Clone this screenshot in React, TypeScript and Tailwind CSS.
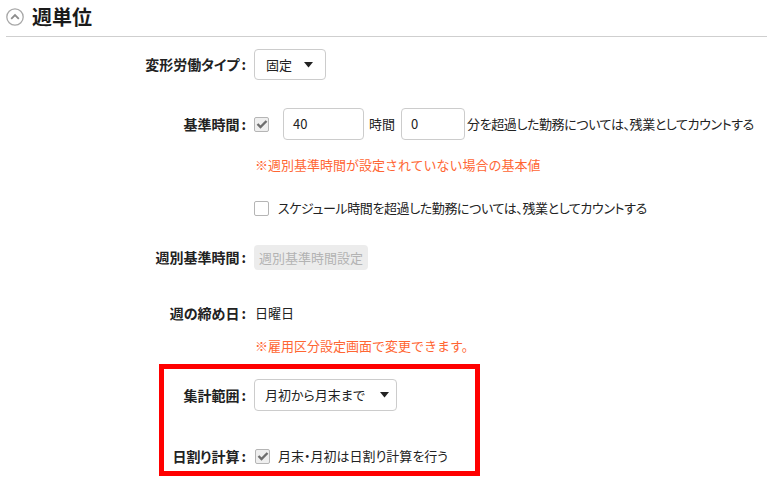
import React from "react";

const FONT = { fontFamily: '"Noto Sans CJK JP", "Noto Sans", sans-serif' };
const PALT = { fontFeatureSettings: '"palt"' };

const CheckBox: React.FC<{ checked?: boolean }> = ({ checked }) =>
  checked ? (
    <span className="flex h-[15px] w-[15px] shrink-0 items-center justify-center rounded-[2px] border border-[#b5b5b5] bg-[#efefef]">
      <svg width="12" height="10" viewBox="0 0 12 10">
        <path d="M1.5 5 L4.5 8 L10.5 2" fill="none" stroke="#6e6e6e" strokeWidth="2.4" />
      </svg>
    </span>
  ) : (
    <span className="h-[15px] w-[15px] shrink-0 rounded-[2px] border border-[#b5b5b5] bg-white" />
  );

const Caret = () => (
  <svg width="9" height="6" viewBox="0 0 9 6">
    <path d="M0 0 H9 L4.5 5.5 Z" fill="#222" />
  </svg>
);

const Row: React.FC<{ label: string; w?: string; className?: string; children: React.ReactNode }> = ({
  label,
  w = "w-[246px]",
  className = "",
  children,
}) => (
  <div className={`flex items-center ${className}`}>
    <div className={`${w} shrink-0 text-right text-[14px] font-bold text-[#222]`} style={PALT}>
      {label}
      <span className="ml-[2px]">:</span>
    </div>
    <div className="ml-[8px] flex items-center text-[13px] text-[#222]">{children}</div>
  </div>
);

export default function App() {
  return (
    <div className="h-[483px] w-[767px] overflow-hidden bg-white" style={FONT}>
      {/* Section header */}
      <div className="ml-[6px] flex h-[37px] items-center gap-[8px] border-b border-[#cfcfcf] pb-[2px]">
        <svg width="18" height="18" viewBox="0 0 18 18">
          <circle cx="9" cy="9" r="8.2" fill="none" stroke="#a8a8a8" strokeWidth="1.3" />
          <path d="M5.2 10.8 L9 7 L12.8 10.8" fill="none" stroke="#8c8c8c" strokeWidth="1.8" />
        </svg>
        <span className="text-[20px] font-bold leading-none text-[#1a1a1a]">週単位</span>
      </div>

      <Row label="変形労働タイプ" className="mt-[12px] h-[31px]">
        <div className="flex h-[31px] w-[72px] items-center justify-between rounded-[4px] border border-[#cccccc] pl-[11px] pr-[12px]">
          <span>固定</span>
          <Caret />
        </div>
      </Row>

      <Row label="基準時間" className="mt-[28px] h-[32px]">
        <CheckBox checked />
        <div className="ml-[14px] flex h-[32px] w-[81px] items-center rounded-[4px] border border-[#cccccc] pl-[9px]">40</div>
        <span className="ml-[5px]">時間</span>
        <div className="ml-[6px] flex h-[32px] w-[64px] items-center rounded-[4px] border border-[#cccccc] pl-[9px]">0</div>
        <span className="ml-[2px] tracking-[-0.4px]" style={PALT}>
          分を超過した勤務については、残業としてカウントする
        </span>
      </Row>

      <div className="ml-[255px] mt-[16px] h-[18px] text-[13px] leading-[18px] text-[#ff6633]">
        ※週別基準時間が設定されていない場合の基本値
      </div>

      <div className="ml-[254px] mt-[25px] flex h-[18px] items-center text-[13px] text-[#222]">
        <CheckBox />
        <span className="ml-[9px] tracking-[-0.4px]" style={PALT}>
          スケジュール時間を超過した勤務については、残業としてカウントする
        </span>
      </div>

      <Row label="週別基準時間" className="mt-[28px] h-[25px]">
        <div className="flex h-[25px] w-[114px] items-center justify-center rounded-[4px] bg-[#ececec] text-[13px] text-[#b3b3b3]">
          週別基準時間設定
        </div>
      </Row>

      <Row label="週の締め日" className="mt-[34px] h-[18px]">
        <span className="ml-[1px]">日曜日</span>
      </Row>

      <div className="ml-[255px] mt-[15px] h-[18px] text-[13px] leading-[18px] text-[#ff6633]">
        ※雇用区分設定画面で変更できます。
      </div>

      <div className="ml-[159px] mt-[9px] h-[112px] w-[321px] border-[5px] border-[#ff0000]">
        <Row label="集計範囲" w="w-[82px]" className="mt-[10px] h-[32px]">
          <div className="flex h-[32px] w-[143px] items-center justify-between rounded-[4px] border border-[#cccccc] pl-[10px] pr-[7px]">
            <span style={PALT}>月初から月末まで</span>
            <Caret />
          </div>
        </Row>
        <Row label="日割り計算" w="w-[82px]" className="mt-[36px] h-[18px]">
          <span className="ml-[1px] flex items-center">
            <CheckBox checked />
          </span>
          <span className="ml-[8px]" style={PALT}>
            月末・月初は日割り計算を行う
          </span>
        </Row>
      </div>
    </div>
  );
}
